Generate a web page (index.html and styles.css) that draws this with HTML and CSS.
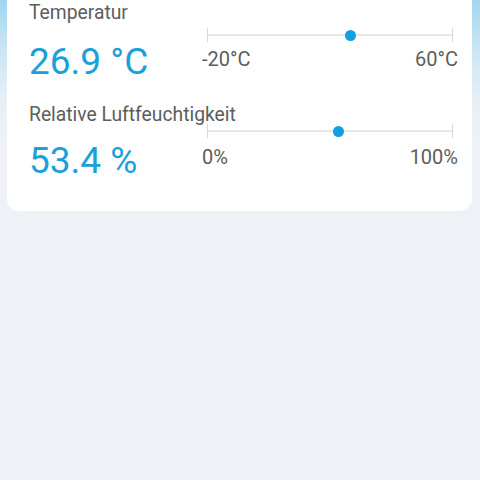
FILE: index.html
```html
<!DOCTYPE html>
<html lang="de">
<head>
<meta charset="utf-8">
<title>Sensor</title>
<link rel="stylesheet" href="styles.css">
</head>
<body>
<main class="card">
  <section class="metric metric-temp">
    <div class="label">Temperatur</div>
    <div class="value">26.9 °C</div>
    <div class="slider">
      <div class="track">
        <span class="tick"></span>
        <span class="line"><span class="thumb" style="left: 58.6%"></span></span>
        <span class="tick"></span>
      </div>
      <div class="range"><span>-20°C</span><span>60°C</span></div>
    </div>
  </section>
  <section class="metric metric-hum">
    <div class="label">Relative Luftfeuchtigkeit</div>
    <div class="value">53.4 %</div>
    <div class="slider">
      <div class="track">
        <span class="tick"></span>
        <span class="line"><span class="thumb" style="left: 53.4%"></span></span>
        <span class="tick"></span>
      </div>
      <div class="range"><span>0%</span><span>100%</span></div>
    </div>
  </section>
</main>
</body>
</html>
```
FILE: styles.css
```css
html, body {
  margin: 0;
  padding: 0;
}
body {
  width: 480px;
  height: 480px;
  overflow: hidden;
  background: linear-gradient(180deg, #a0d6ef 0px, #cbe6f4 50px, #e6eff6 100px, #eef2f7 140px, #eef2f7 100%);
  font-family: Roboto, "Noto Sans", Arial, sans-serif;
}
.card {
  margin: 0 8px 0 7px;
  background: #ffffff;
  border-radius: 0 0 12px 12px;
  padding: 2px 14px 28px 22px;
  display: flex;
  flex-direction: column;
  gap: 20px;
}
.metric {
  display: grid;
  grid-template-columns: 173px 256px;
  grid-template-rows: auto auto;
}
.label {
  grid-column: 1;
  grid-row: 1;
  white-space: nowrap;
  font-size: 19.3px;
  line-height: 22px;
  color: #5d5d5d;
}
.value {
  grid-column: 1;
  grid-row: 2;
  margin-top: 16px;
  font-size: 37px;
  line-height: 44px;
  color: #1aa0da;
}
.metric-hum .value {
  margin-top: 13px;
}
.slider {
  grid-column: 2;
  grid-row: 1 / 3;
  padding-top: 26px;
  display: flex;
  flex-direction: column;
  gap: 6px;
}
.metric-hum .slider {
  padding-top: 20px;
  gap: 8px;
}
.track {
  height: 14px;
  margin: 0 5px;
  display: flex;
  align-items: center;
}
.tick {
  width: 1px;
  height: 14px;
  background: #d9d9d9;
}
.line {
  flex: 1;
  height: 2px;
  background: #e8e8e8;
  position: relative;
}
.thumb {
  position: absolute;
  top: 50%;
  width: 11px;
  height: 11px;
  margin: -5.5px 0 0 -5.5px;
  border-radius: 50%;
  background: #129ee0;
}
.range {
  display: flex;
  justify-content: space-between;
  font-size: 20px;
  line-height: 22px;
  color: #5d5d5d;
}
```
